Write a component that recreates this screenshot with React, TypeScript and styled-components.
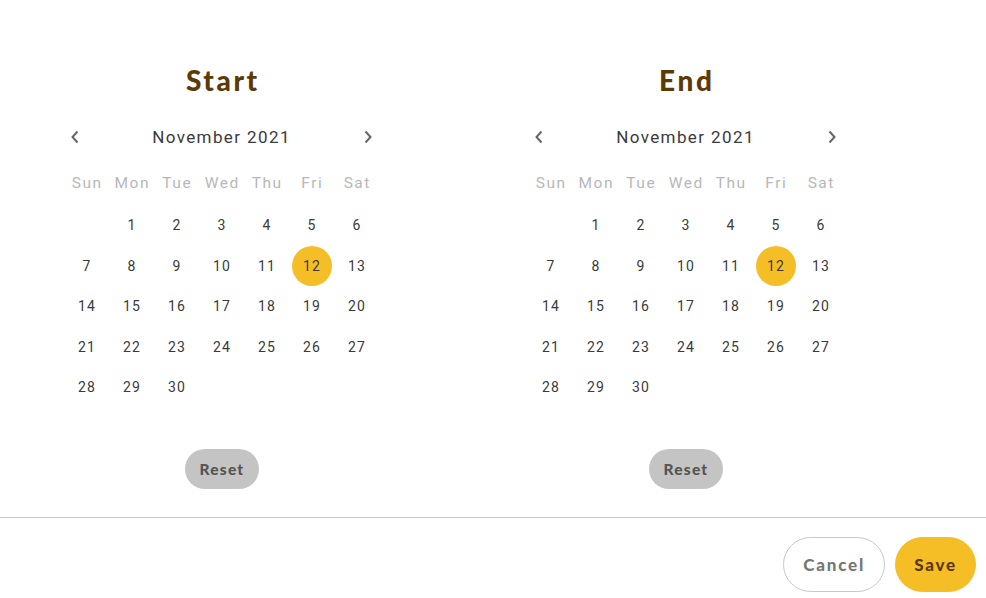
import React from "react";
import styled, { createGlobalStyle } from "styled-components";

const GlobalStyle = createGlobalStyle`
  html, body { margin: 0; padding: 0; background: #ffffff; }
  body { font-family: Roboto, "Liberation Sans", sans-serif; }
  * { box-sizing: border-box; }
`;

const Page = styled.div`
  width: 986px;
  height: 598px;
  display: flex;
  flex-direction: column;
  background: #fff;
  overflow: hidden;
`;

const Calendars = styled.div`
  display: flex;
  padding: 64px 0 0 64px;
  gap: 149px;
`;

const Column = styled.section`
  width: 315px;
  display: flex;
  flex-direction: column;
  align-items: center;
`;

const Title = styled.h2`
  margin: 0 0 21px;
  font-family: Lato, "Open Sans", sans-serif;
  font-weight: 900;
  font-size: 28px;
  line-height: 32px;
  letter-spacing: 2.6px;
  padding-left: 2.6px;
  color: #5b3a08;
`;

const Header = styled.div`
  width: 100%;
  height: 40px;
  display: flex;
  align-items: center;
  justify-content: space-between;
`;

const NavButton = styled.button`
  width: 21px;
  height: 30px;
  padding: 0;
  border: none;
  background: transparent;
  display: flex;
  align-items: center;
  justify-content: center;
  color: #666;
  cursor: pointer;
`;

const MonthLabel = styled.span`
  font-size: 17px;
  letter-spacing: 1.4px;
  color: #3a3a3a;
`;

const Grid = styled.div`
  width: 100%;
  display: grid;
  grid-template-columns: repeat(7, 45px);
  grid-auto-rows: 40.5px;
`;

const WeekRow = styled(Grid)`
  grid-auto-rows: 40px;
  margin: 6px 0 2px;
`;

const WeekDay = styled.div`
  display: flex;
  align-items: center;
  justify-content: center;
  font-size: 15.5px;
  letter-spacing: 1.5px;
  padding-left: 1.5px;
  color: #b8b8b8;
`;

const Cell = styled.div`
  display: flex;
  align-items: center;
  justify-content: center;
`;

const Day = styled.span<{ $selected?: boolean }>`
  width: 40px;
  height: 40px;
  border-radius: 50%;
  display: flex;
  align-items: center;
  justify-content: center;
  font-size: 14px;
  letter-spacing: 1.2px;
  padding-left: 1.2px;
  color: #3a3a3a;
  background: ${(p) => (p.$selected ? "#f6be26" : "transparent")};
`;

const ResetButton = styled.button`
  margin-top: 41px;
  width: 74px;
  height: 40px;
  border: none;
  border-radius: 20px;
  background: #c4c4c4;
  color: #555;
  font-family: Lato, "Open Sans", sans-serif;
  font-weight: 900;
  font-size: 15.5px;
  letter-spacing: 1.2px;
  padding: 0 0 0 1px;
  cursor: pointer;
`;

const Divider = styled.hr`
  margin: 28px 0 0;
  border: none;
  border-top: 1px solid #c6c6c6;
  width: 100%;
`;

const Footer = styled.div`
  display: flex;
  justify-content: flex-end;
  gap: 10px;
  padding: 19px 10px 0 0;
`;

const ActionButton = styled.button<{ $primary?: boolean }>`
  height: 55px;
  padding: 0 ${(p) => (p.$primary ? "18px" : "19px")};
  border-radius: 28px;
  border: 1px solid ${(p) => (p.$primary ? "#f6be26" : "#c8c8c8")};
  background: ${(p) => (p.$primary ? "#f6be26" : "#fff")};
  color: ${(p) => (p.$primary ? "#5b3a08" : "#777")};
  font-family: Lato, "Open Sans", sans-serif;
  font-weight: 900;
  font-size: 17px;
  letter-spacing: 1.8px;
  cursor: pointer;
`;

const Chevron = ({ dir }: { dir: "left" | "right" }) => (
  <svg width="10" height="14" viewBox="0 0 10 14" fill="none">
    <path
      d={dir === "left" ? "M7.5 1.5 L2.5 7 L7.5 12.5" : "M2.5 1.5 L7.5 7 L2.5 12.5"}
      stroke="currentColor"
      strokeWidth="2"
    />
  </svg>
);

const weekDays = ["Sun", "Mon", "Tue", "Wed", "Thu", "Fri", "Sat"];
const days: (number | null)[] = [null, ...Array.from({ length: 30 }, (_, i) => i + 1)];

const Calendar = ({ title }: { title: string }) => (
  <Column>
    <Title>{title}</Title>
    <Header>
      <NavButton aria-label="Previous month">
        <Chevron dir="left" />
      </NavButton>
      <MonthLabel>November 2021</MonthLabel>
      <NavButton aria-label="Next month">
        <Chevron dir="right" />
      </NavButton>
    </Header>
    <WeekRow>
      {weekDays.map((d) => (
        <WeekDay key={d}>{d}</WeekDay>
      ))}
    </WeekRow>
    <Grid>
      {days.map((d, i) => (
        <Cell key={i}>{d !== null && <Day $selected={d === 12}>{d}</Day>}</Cell>
      ))}
    </Grid>
    <ResetButton>Reset</ResetButton>
  </Column>
);

export default function App() {
  return (
    <Page>
      <GlobalStyle />
      <Calendars>
        <Calendar title="Start" />
        <Calendar title="End" />
      </Calendars>
      <Divider />
      <Footer>
        <ActionButton>Cancel</ActionButton>
        <ActionButton $primary>Save</ActionButton>
      </Footer>
    </Page>
  );
}
